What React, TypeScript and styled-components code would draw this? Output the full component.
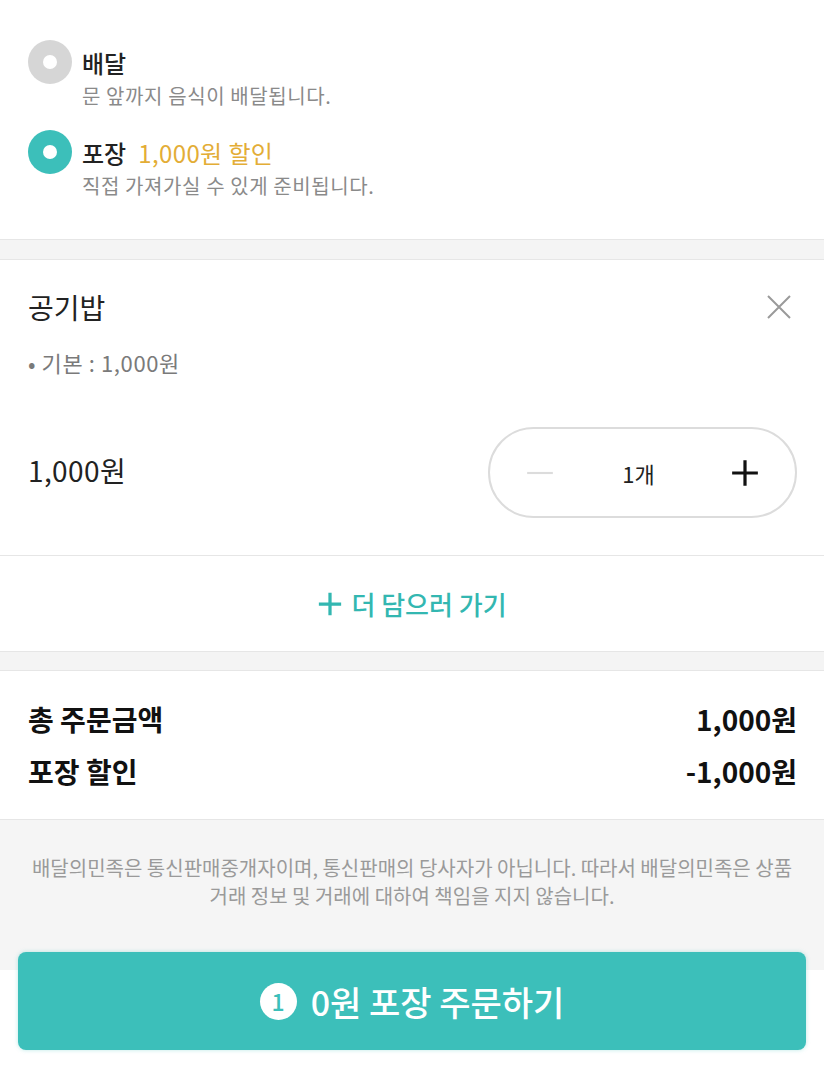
import React from "react";
import styled, { createGlobalStyle } from "styled-components";

const Colors = {
	teal: "#3cbfba",
	tealText: "#33b7b1",
	gold: "#e3ad36",
	text: "#222",
	sub: "#8a8a8a",
	line: "#e6e6e6",
	band: "#f4f4f4"
} as const;

const GlobalStyle = createGlobalStyle`
	html, body {
		margin: 0;
		padding: 0;
		background: #fff;
	}
	body {
		font-family: "Noto Sans CJK KR", "Noto Sans", sans-serif;
		color: ${Colors.text};
		-webkit-font-smoothing: antialiased;
	}
	* { box-sizing: border-box; }
`;

const Page = styled.div`
	width: 824px;
	min-height: 1080px;
	background: #fff;
	display: flex;
	flex-direction: column;
`;

const Section = styled.section<{ padding: string }>`
	background: #fff;
	padding: ${props => props.padding};
	border-bottom: 1px solid ${Colors.line};
`;

const Band = styled.div<{ top?: boolean }>`
	height: 20px;
	background: ${Colors.band};
	border-bottom: 1px solid ${Colors.line};
	border-top: ${props => (props.top ? `1px solid ${Colors.line}` : "0")};
`;

const Options = styled.div`
	display: flex;
	flex-direction: column;
	gap: 22px;
`;

const Option = styled.label`
	display: grid;
	grid-template-columns: 44px 1fr;
	column-gap: 10px;
	align-items: center;
`;

const Radio = styled.span<{ checked?: boolean }>`
	width: 44px;
	height: 44px;
	border-radius: 50%;
	background: ${props => (props.checked ? Colors.teal : "#d6d6d6")};
	display: flex;
	align-items: center;
	justify-content: center;
	&::after {
		content: "";
		width: 14px;
		height: 14px;
		border-radius: 50%;
		background: #fff;
	}
`;

const OptionTitle = styled.div`
	height: 44px;
	display: flex;
	align-items: center;
	gap: 12px;
	font-size: 24px;
	font-weight: 500;
	color: ${Colors.text};
`;

const Discount = styled.span`
	color: ${Colors.gold};
	font-weight: 400;
	letter-spacing: 0.4px;
`;

const OptionSub = styled.div`
	grid-column: 2;
	font-size: 20px;
	line-height: 24px;
	letter-spacing: 0.6px;
	color: ${Colors.sub};
`;

const ItemHead = styled.div`
	display: flex;
	align-items: center;
	justify-content: space-between;
	height: 36px;
`;

const ItemName = styled.div`
	font-size: 28px;
	font-weight: 400;
	color: ${Colors.text};
`;

const CloseButton = styled.button`
	border: 0;
	background: none;
	padding: 0;
	margin-right: 4px;
	width: 28px;
	height: 28px;
	display: flex;
	align-items: center;
	justify-content: center;
`;

const ItemOption = styled.div`
	margin-top: 23px;
	font-size: 22px;
	line-height: 28px;
	letter-spacing: 0.6px;
	color: #7a7a7a;
`;

const PriceRow = styled.div`
	margin-top: 51px;
	display: flex;
	align-items: center;
	justify-content: space-between;
`;

const Price = styled.div`
	font-size: 28px;
	letter-spacing: 0.4px;
	color: ${Colors.text};
	margin-top: -6px;
`;

const Stepper = styled.div`
	width: 309px;
	height: 91px;
	border: 2px solid #dcdcdc;
	border-radius: 46px;
	display: grid;
	grid-template-columns: 100px 1fr 100px;
	align-items: center;
	justify-items: center;
`;

const StepButton = styled.button`
	border: 0;
	background: none;
	padding: 0;
	width: 32px;
	height: 32px;
	display: flex;
	align-items: center;
	justify-content: center;
`;

const Count = styled.div`
	font-size: 22px;
	color: ${Colors.text};
	margin-left: -8px;
`;

const MoreButton = styled.button`
	width: 100%;
	height: 95px;
	border: 0;
	background: #fff;
	display: flex;
	align-items: center;
	justify-content: center;
	gap: 8px;
	font-family: inherit;
	font-size: 26px;
	font-weight: 500;
	color: ${Colors.tealText};
	padding: 0;
`;

const SummaryRow = styled.div`
	display: flex;
	align-items: center;
	justify-content: space-between;
	height: 36px;
	font-size: 28px;
	font-weight: 700;
	color: #111;
`;

const Summary = styled.div`
	display: flex;
	flex-direction: column;
	gap: 16px;
`;

const Footer = styled.footer`
	flex: 1;
	background: linear-gradient(#f5f5f5 0, #f5f5f5 150px, #fff 150px);
	padding: 34px 18px 30px;
	display: flex;
	flex-direction: column;
	align-items: center;
`;

const Notice = styled.p`
	margin: 0;
	font-size: 20px;
	line-height: 28px;
	color: #9a9a9a;
	text-align: center;
	white-space: nowrap;
`;

const OrderButton = styled.button`
	margin-top: 42px;
	width: 788px;
	height: 98px;
	border: 0;
	border-radius: 8px;
	background: ${Colors.teal};
	display: flex;
	align-items: center;
	justify-content: center;
	gap: 14px;
	font-family: inherit;
	font-size: 34px;
	font-weight: 500;
	color: #fff;
	box-shadow: 0 0 4px rgba(60, 191, 186, 0.35);
`;

const Badge = styled.span`
	width: 37px;
	height: 37px;
	border-radius: 50%;
	background: #fff;
	color: ${Colors.teal};
	font-size: 23px;
	font-weight: 500;
	display: flex;
	align-items: center;
	justify-content: center;
`;

const Line = ({ color, width, size }: { color: string; width: number; size: number }) => (
	<svg width={size} height={size} viewBox="0 0 28 28">
		<path d="M2 14h24" stroke={color} strokeWidth={width} />
	</svg>
);

const Plus = ({ color, width, size }: { color: string; width: number; size: number }) => (
	<svg width={size} height={size} viewBox="0 0 28 28">
		<path d="M2 14h24M14 2v24" stroke={color} strokeWidth={width} />
	</svg>
);

export default function App() {
	return (
		<Page>
			<GlobalStyle />
			<Section padding="40px 28px 41px">
				<Options>
					<Option>
						<Radio />
						<OptionTitle>배달</OptionTitle>
						<OptionSub>문 앞까지 음식이 배달됩니다.</OptionSub>
					</Option>
					<Option>
						<Radio checked />
						<OptionTitle>
							포장 <Discount>1,000원 할인</Discount>
						</OptionTitle>
						<OptionSub>직접 가져가실 수 있게 준비됩니다.</OptionSub>
					</Option>
				</Options>
			</Section>
			<Band />
			<Section padding="29px 27px 37px 28px">
				<ItemHead>
					<ItemName>공기밥</ItemName>
					<CloseButton aria-label="삭제">
						<svg width="26" height="26" viewBox="0 0 26 26">
							<path d="M2 2l22 22M24 2L2 24" stroke="#9a9a9a" strokeWidth="2" />
						</svg>
					</CloseButton>
				</ItemHead>
				<ItemOption>• 기본 : 1,000원</ItemOption>
				<PriceRow>
					<Price>1,000원</Price>
					<Stepper>
						<StepButton aria-label="빼기">
							<Line color="#dcdcdc" width={2} size={30} />
						</StepButton>
						<Count>1개</Count>
						<StepButton aria-label="더하기">
							<Plus color="#111" width={3} size={30} />
						</StepButton>
					</Stepper>
				</PriceRow>
			</Section>
			<MoreButton>
				<Plus color={Colors.tealText} width={3.5} size={26} />
				더 담으러 가기
			</MoreButton>
			<Band top />
			<Section padding="30px 27px 30px 28px">
				<Summary>
					<SummaryRow>
						<span>총 주문금액</span>
						<span>1,000원</span>
					</SummaryRow>
					<SummaryRow>
						<span>포장 할인</span>
						<span>-1,000원</span>
					</SummaryRow>
				</Summary>
			</Section>
			<Footer>
				<Notice>
					배달의민족은 통신판매중개자이며, 통신판매의 당사자가 아닙니다. 따라서 배달의민족은 상품
					<br />
					거래 정보 및 거래에 대하여 책임을 지지 않습니다.
				</Notice>
				<OrderButton>
					<Badge>1</Badge>
					0원 포장 주문하기
				</OrderButton>
			</Footer>
		</Page>
	);
}
